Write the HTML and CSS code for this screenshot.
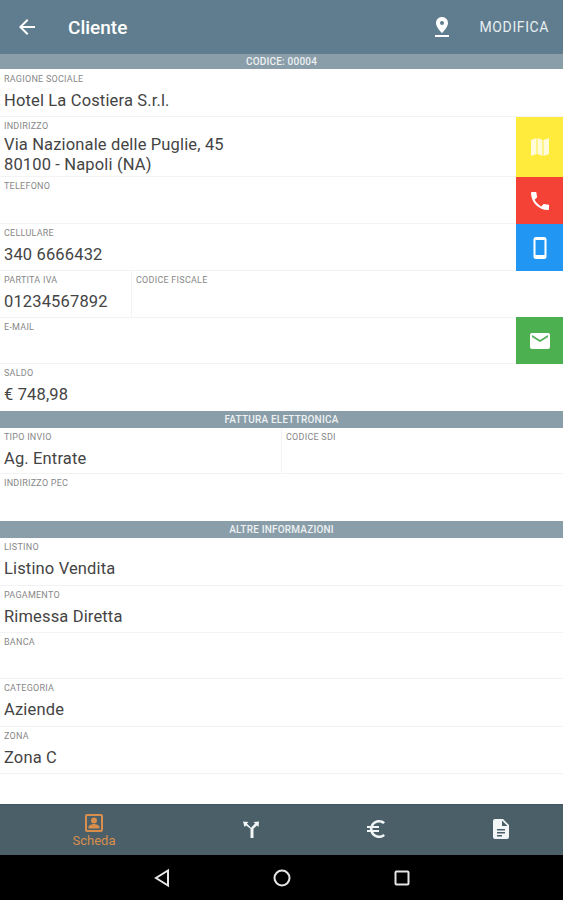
FILE: index.html
```html
<!DOCTYPE html>
<html lang="en">
<head>
  <meta charset="UTF-8">
  <meta name="viewport" content="width=device-width, initial-scale=1.0">
  <title>Cliente</title>
  <link rel="stylesheet" href="styles.css">
</head>
<body>

  <!-- Toolbar -->
  <header class="toolbar">
    <svg class="back" width="24" height="24" viewBox="0 0 24 24"><path d="M20 11H7.800l5.600-5.600L12 4l-8 8 8 8 1.400-1.400L7.800 13H20z"/></svg>
    <h1 class="title">Cliente</h1>
    <svg class="pin" width="24" height="24" viewBox="0 0 24 24"><path fill-rule="evenodd" d="M12 2c-3.300 0-6 2.600-6 5.900C6 12.300 12 18 12 18s6-5.700 6-10.100C18 4.600 15.300 2 12 2zm0 4a2 2 0 1 1 0 4 2 2 0 0 1 0-4z"/><path d="M5 20h14v2H5z"/></svg>
    <a class="action" href="#">MODIFICA</a>
  </header>

  <main class="content">
    <div class="section first">CODICE: 00004</div>

    <div class="row h47"><div class="field"><label>Ragione sociale</label><div class="value">Hotel La Costiera S.r.l.</div></div></div>

    <div class="row h60">
      <div class="field"><label>Indirizzo</label><div class="value multi">Via Nazionale delle Puglie, 45<br>80100 - Napoli (NA)</div></div>
      <a class="side yellow" href="#"><svg width="24" height="24" viewBox="0 0 24 24"><path d="M3 5l5.500-2v16L3 21zM9.500 3l5 2v16l-5-2zM15.500 5L21 3v16l-5.500 2z"/></svg></a>
    </div>
    <div class="row h47">
      <div class="field"><label>Telefono</label></div>
      <a class="side red" href="#"><svg width="24" height="24" viewBox="0 0 24 24"><path d="M6.600 10.800c1.400 2.800 3.800 5.100 6.600 6.600l2.200-2.200c.3-.3.700-.4 1-.2 1.100.4 2.300.6 3.600.6.600 0 1 .4 1 1V20c0 .6-.4 1-1 1C10.600 21 3 13.400 3 4c0-.6.400-1 1-1h3.500c.6 0 1 .4 1 1 0 1.300.2 2.500.6 3.600.1.300 0 .7-.2 1z"/></svg></a>
    </div>
    <div class="row h47">
      <div class="field"><label>Cellulare</label><div class="value">340 6666432</div></div>
      <a class="side blue" href="#"><svg width="24" height="24" viewBox="0 0 24 24"><path fill-rule="evenodd" d="M16 1H8a2.500 2.500 0 0 0-2.500 2.500v17A2.500 2.500 0 0 0 8 23h8a2.500 2.500 0 0 0 2.500-2.500v-17A2.500 2.500 0 0 0 16 1zM16.500 19h-9V4h9z"/></svg></a>
    </div>
    <div class="row h47">
      <div class="field piva"><label>Partita IVA</label><div class="value">01234567892</div></div>
      <div class="field"><label>Codice fiscale</label></div>
    </div>
    <div class="row h46">
      <div class="field"><label>E-mail</label></div>
      <a class="side green" href="#"><svg width="24" height="24" viewBox="0 0 24 24"><path d="M20 4H4a2 2 0 0 0-2 2v12c0 1.100.9 2 2 2h16a2 2 0 0 0 2-2V6a2 2 0 0 0-2-2zm0 4l-8 5-8-5V6l8 5 8-5z"/></svg></a>
    </div>
    <div class="row h47 plain"><div class="field"><label>Saldo</label><div class="value">€ 748,98</div></div></div>

    <div class="section">FATTURA ELETTRONICA</div>
    <div class="row h46">
      <div class="field half"><label>Tipo invio</label><div class="value">Ag. Entrate</div></div>
      <div class="field"><label>Codice SDI</label></div>
    </div>
    <div class="row h47 plain"><div class="field"><label>Indirizzo PEC</label></div></div>

    <div class="section">ALTRE INFORMAZIONI</div>
    <div class="row h48"><div class="field"><label>Listino</label><div class="value">Listino Vendita</div></div></div>
    <div class="row h47"><div class="field"><label>Pagamento</label><div class="value">Rimessa Diretta</div></div></div>
    <div class="row h46"><div class="field"><label>Banca</label></div></div>
    <div class="row h48"><div class="field"><label>Categoria</label><div class="value">Aziende</div></div></div>
    <div class="row h47"><div class="field"><label>Zona</label><div class="value">Zona C</div></div></div>
  </main>

  <!-- Bottom tabs -->
  <nav class="tabs">
    <a class="tab active" href="#">
      <svg width="24" height="24" viewBox="0 0 24 24"><path fill-rule="evenodd" d="M5 3h14a2 2 0 0 1 2 2v14a2 2 0 0 1-2 2H5a2 2 0 0 1-2-2V5a2 2 0 0 1 2-2zm0 2v14h14V5zm7 1.500a3 3 0 1 1 0 6 3 3 0 0 1 0-6zM6.500 17.500v-1.500c0-2 3.700-3 5.500-3s5.500 1 5.500 3v1.500z"/></svg>
      <span>Scheda</span>
    </a>
    <a class="tab" href="#"><svg width="24" height="24" viewBox="0 0 24 24"><path d="M4 4.500l5.500.5-1.600 1.600 4.100 4.100 4.100-4.100L14.500 5l5.500-.5-.5 5.500-1.600-1.600-3.400 3.400v9.200h-3v-9.200L7.100 8.400 5.500 10z"/></svg></a>
    <a class="tab" href="#"><svg width="24" height="24" viewBox="0 0 24 24"><path d="M15 18.500c-2.500 0-4.700-1.400-5.800-3.500H15v-2H8.600c0-.3-.1-.7-.1-1s0-.7.1-1H15V9H9.200C10.300 6.900 12.500 5.500 15 5.500c1.600 0 3.100.6 4.200 1.600L21 5.300C19.400 3.900 17.300 3 15 3c-3.900 0-7.200 2.500-8.500 6H3v2h3c0 .3-.1.700-.1 1s0 .7.1 1H3v2h3.500c1.300 3.500 4.600 6 8.500 6 2.300 0 4.400-.9 6-2.300l-1.800-1.800c-1.100 1-2.600 1.600-4.200 1.600z"/></svg></a>
    <a class="tab" href="#"><svg width="24" height="24" viewBox="0 0 24 24"><path fill-rule="evenodd" d="M6 2h8l6 6v12a2 2 0 0 1-2 2H6a2 2 0 0 1-2-2V4a2 2 0 0 1 2-2zm7 1.500V9h5.500zM8 12v1.500h8V12zm0 3v1.500h8V15zm0 3v1.500h5V18z"/></svg></a>
  </nav>

  <!-- Android navigation bar -->
  <div class="sysbar">
    <svg width="24" height="24" viewBox="0 0 24 24"><path d="M18 4.500v15L6 12z"/></svg>
    <svg width="24" height="24" viewBox="0 0 24 24"><circle cx="12" cy="12" r="7.500"/></svg>
    <svg width="24" height="24" viewBox="0 0 24 24"><rect x="5.500" y="5.500" width="13" height="13" rx="1"/></svg>
  </div>

</body>
</html>
```

FILE: styles.css
```css
body {
  font-family: 'Roboto', sans-serif;
  background: #fff;
  margin: 0;
  padding: 0;
  width: 563px;
  height: 900px;
  display: flex;
  flex-direction: column;
  overflow: hidden;
  color: #444;
}

a {
  text-decoration: none;
  color: inherit;
}

/* Toolbar */
.toolbar {
  height: 54px;
  flex: none;
  box-sizing: border-box;
  display: flex;
  align-items: center;
  background-color: #5f7d8e;
  color: #fff;
  padding: 0 15px;
}

.toolbar svg {
  fill: #fff;
  flex: none;
}

.title {
  font-size: 19px;
  font-weight: 500;
  margin: 0 0 0 29px;
  flex: 1;
}

.action {
  font-size: 14px;
  letter-spacing: 0.6px;
  margin-left: 26px;
  margin-right: -1px;
  color: #e8eef1;
}

/* Form */
.content {
  flex: 1;
}

.section {
  height: 17px;
  line-height: 17px;
  background-color: #8a9ea9;
  color: #edf1f3;
  font-size: 10px;
  font-weight: 500;
  letter-spacing: 0.2px;
  text-align: center;
}

.section.first {
  height: 15px;
  line-height: 15px;
  margin-bottom: 1px;
}

.row {
  display: flex;
  box-sizing: border-box;
  border-bottom: 1px solid #f3f3f3;
}

.row.plain {
  border-bottom: none;
}

.h46 { height: 46px; }
.h47 { height: 47px; }
.h48 { height: 48px; }
.h60 { height: 60px; }

.field {
  flex: 1;
  padding: 5px 4px 0;
  min-width: 0;
}

.field.piva {
  flex: none;
  width: 132px;
  box-sizing: border-box;
  border-right: 1px solid #f3f3f3;
}

.field.half {
  flex: none;
  width: 282px;
  box-sizing: border-box;
  border-right: 1px solid #f3f3f3;
}

.field label {
  display: block;
  font-size: 9px;
  line-height: 9px;
  letter-spacing: 0.25px;
  color: #888;
  text-transform: uppercase;
}

.value {
  font-size: 16.500px;
  line-height: 20px;
  letter-spacing: 0.15px;
  margin-top: 7px;
}

.value.multi {
  margin-top: 4px;
}

/* Coloured buttons on the right */
.side {
  width: 47px;
  flex: none;
  margin-bottom: -1px;
  display: flex;
  align-items: center;
  justify-content: center;
}

.side svg {
  fill: #fff;
}

.yellow { background-color: #ffeb3b; }
.yellow svg { fill: #fffbd8; }
.red { background-color: #f44336; }
.blue { background-color: #2196f3; }
.green { background-color: #4caf50; margin-top: -1px; }

/* Bottom tabs */
.tabs {
  height: 51px;
  flex: none;
  display: flex;
  background-color: #4a5f68;
  border-top: 1px solid #3f5660;
  box-sizing: border-box;
}

.tab {
  width: 125px;
  display: flex;
  flex-direction: column;
  align-items: center;
  padding-top: 12px;
}

.tab svg {
  fill: #f2f6f7;
  flex: none;
}

.tab.active {
  width: 188px;
  color: #d98e4c;
  padding-top: 6px;
  font-size: 13px;
}

.tab.active svg {
  fill: #d98e4c;
}

.tab.active span {
  line-height: 14px;
  margin-top: -1px;
}

/* Android navigation bar */
.sysbar {
  height: 45px;
  flex: none;
  background-color: #000;
  display: flex;
  justify-content: center;
  align-items: center;
  gap: 96px;
}

.sysbar svg {
  fill: none;
  stroke: #e6e6e6;
  stroke-width: 2;
}
```
